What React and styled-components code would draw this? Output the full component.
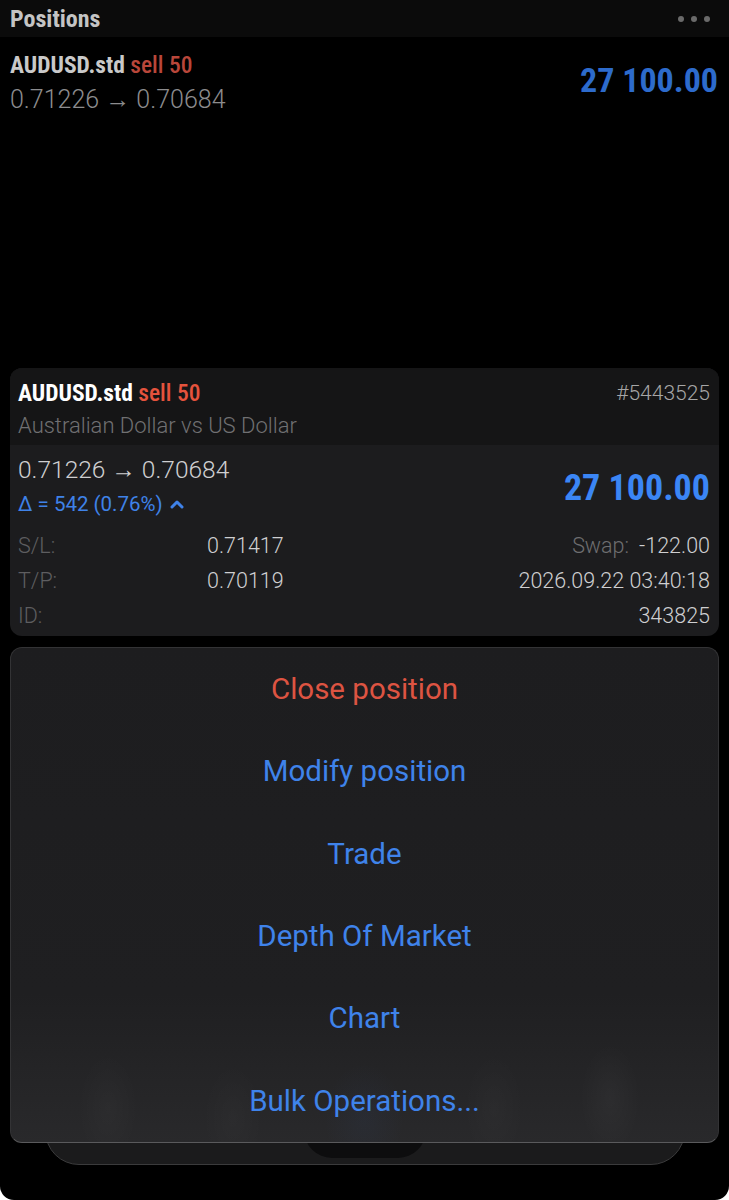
import styled, { createGlobalStyle } from "styled-components";

const GlobalStyle = createGlobalStyle`
  html, body {
    margin: 0;
    padding: 0;
    background: #ffffff;
  }
  * {
    box-sizing: border-box;
  }
`;

const narrow = `Roboto, "Open Sans", "DejaVu Sans Condensed", sans-serif`;
const text = `Roboto, "Liberation Sans", sans-serif`;

const Screen = styled.div`
  position: relative;
  width: 729px;
  height: 1200px;
  background: #000;
  overflow: hidden;
  border-radius: 0 0 14px 14px;
  display: flex;
  flex-direction: column;
`;

const Header = styled.div`
  height: 37px;
  background: #0b0b0b;
  display: flex;
  align-items: center;
  justify-content: space-between;
  padding: 0 19px 0 10px;
  h1 {
    margin: 0;
    font-family: ${narrow};
    font-stretch: 75%;
    font-weight: 700;
    font-size: 24px;
    color: #c4c4c4;
  }
`;

const Dots = styled.div`
  display: flex;
  gap: 7px;
  span {
    width: 6px;
    height: 6px;
    border-radius: 50%;
    background: #6a6a6a;
  }
`;

const Row = styled.div`
  display: flex;
  justify-content: space-between;
  align-items: center;
  padding: 13px 11px 0 10px;
`;

const Symbol = styled.div`
  font-family: ${narrow};
  font-stretch: 75%;
  font-weight: 700;
  font-size: 23.5px;
  line-height: 30px;
  color: ${(p) => p.color};
  span {
    font-weight: 500;
    color: ${(p) => p.side};
  }
`;

const Prices = styled.div`
  font-family: ${text};
  font-weight: 300;
  font-size: ${(p) => p.size || 25}px;
  line-height: ${(p) => p.lh || 40}px;
  color: ${(p) => p.color};
`;

const Profit = styled.div`
  font-family: ${narrow};
  font-stretch: 75%;
  font-weight: 700;
  font-size: ${(p) => p.size}px;
  margin-bottom: ${(p) => p.lift || 0}px;
  color: ${(p) => p.color};
`;

const TabBar = styled.div`
  position: absolute;
  left: 45px;
  right: 44px;
  bottom: 35px;
  height: 110px;
  background: #1b1b1c;
  border: 1px solid #3b3b3c;
  border-radius: 34px;
  display: flex;
  justify-content: center;
  align-items: flex-end;
`;

const TabBump = styled.div`
  width: 122px;
  height: 40px;
  margin-bottom: 6px;
  background: #0d0d0e;
  border-radius: 0 0 28px 28px;
`;

const Overlay = styled.div`
  position: absolute;
  inset: 0;
  display: flex;
  flex-direction: column;
  justify-content: flex-end;
  gap: 11px;
  padding: 0 10px 57px;
`;

const Card = styled.div`
  border-radius: 12px;
  overflow: hidden;
  background: #1c1c1e;
`;

const CardTop = styled.div`
  background: #151516;
  height: 77px;
  padding: 10px 9px 0 8px;
`;

const TitleLine = styled.div`
  display: flex;
  justify-content: space-between;
  align-items: center;
`;

const Ticket = styled.div`
  font-family: ${text};
  font-weight: 300;
  font-size: 21px;
  color: #a6a6a6;
`;

const Description = styled.div`
  font-family: ${text};
  font-weight: 300;
  font-size: 22px;
  line-height: 35px;
  color: #707072;
`;

const CardBody = styled.div`
  padding: 3px 9px 3px 8px;
`;

const PriceLine = styled.div`
  display: flex;
  justify-content: space-between;
  align-items: center;
  height: 80px;
`;

const Delta = styled.div`
  display: flex;
  align-items: center;
  gap: 7px;
  font-family: ${text};
  font-weight: 400;
  font-size: 20.5px;
  line-height: 36px;
  color: #3f82e8;
`;

const Details = styled.div`
  display: grid;
  grid-template-columns: 189px auto 1fr;
  grid-auto-rows: 35px;
  align-items: center;
  font-family: ${text};
  font-weight: 300;
  font-size: 21.5px;
`;

const Label = styled.div`
  color: #5e5e60;
`;

const Value = styled.div`
  color: #cfcfd1;
  justify-self: ${(p) => (p.end ? "end" : "start")};
  span {
    color: #6e6e70;
    margin-right: 10px;
  }
`;

const Menu = styled.div`
  height: 496px;
  border-radius: 12px;
  background:
    radial-gradient(30px 55px at 97px 460px, rgba(255, 255, 255, 0.025), transparent),
    radial-gradient(30px 55px at 222px 470px, rgba(255, 255, 255, 0.02), transparent),
    radial-gradient(40px 55px at 353px 470px, rgba(70, 120, 220, 0.05), transparent),
    radial-gradient(30px 55px at 483px 460px, rgba(255, 255, 255, 0.02), transparent),
    radial-gradient(30px 55px at 599px 450px, rgba(255, 255, 255, 0.03), transparent),
    linear-gradient(#1d1d1f, #1f1f21 70%, #29292b);
  border: 1px solid #333335;
  border-bottom-color: #5a5a5c;
  display: flex;
  flex-direction: column;
`;

const MenuItem = styled.div`
  flex: 1;
  display: flex;
  align-items: center;
  justify-content: center;
  font-family: ${text};
  font-weight: 400;
  font-size: 29.5px;
  color: ${(p) => (p.danger ? "#dd5442" : "#3f83ea")};
`;

const actions = [
  { label: "Close position", danger: true },
  { label: "Modify position" },
  { label: "Trade" },
  { label: "Depth Of Market" },
  { label: "Chart" },
  { label: "Bulk Operations..." },
];

const App = () => {
  return (
    <>
      <GlobalStyle />
      <Screen>
        <Header>
          <h1>Positions</h1>
          <Dots>
            <span />
            <span />
            <span />
          </Dots>
        </Header>
        <Row>
          <div>
            <Symbol color="#c9c9c9" side="#b9463a">
              AUDUSD.std <span>sell 50</span>
            </Symbol>
            <Prices color="#8c8c8e">0.71226 → 0.70684</Prices>
          </div>
          <Profit size={34} lift={10} color="#2d6bcc">
            27 100.00
          </Profit>
        </Row>

        <TabBar>
          <TabBump />
        </TabBar>

        <Overlay>
          <Card>
            <CardTop>
              <TitleLine>
                <Symbol color="#ffffff" side="#e5533d">
                  AUDUSD.std <span>sell 50</span>
                </Symbol>
                <Ticket>#5443525</Ticket>
              </TitleLine>
              <Description>Australian Dollar vs US Dollar</Description>
            </CardTop>
            <CardBody>
              <PriceLine>
                <div>
                  <Prices color="#cfcfd1" size={24.5} lh={32}>
                    0.71226 → 0.70684
                  </Prices>
                  <Delta>
                    Δ = 542 (0.76%)
                    <svg width="14" height="10" viewBox="0 0 14 10">
                      <path
                        d="M2 8 L7 3 L12 8"
                        fill="none"
                        stroke="#3f82e8"
                        strokeWidth="3"
                        strokeLinecap="round"
                        strokeLinejoin="round"
                      />
                    </svg>
                  </Delta>
                </div>
                <Profit size={36} color="#3b86f5">
                  27 100.00
                </Profit>
              </PriceLine>
              <Details>
                <Label>S/L:</Label>
                <Value>0.71417</Value>
                <Value end>
                  <span>Swap:</span>-122.00
                </Value>
                <Label>T/P:</Label>
                <Value>0.70119</Value>
                <Value end>2026.09.22 03:40:18</Value>
                <Label>ID:</Label>
                <Value />
                <Value end>343825</Value>
              </Details>
            </CardBody>
          </Card>
          <Menu>
            {actions.map((a) => (
              <MenuItem key={a.label} danger={a.danger}>
                {a.label}
              </MenuItem>
            ))}
          </Menu>
        </Overlay>
      </Screen>
    </>
  );
};

export default App;
